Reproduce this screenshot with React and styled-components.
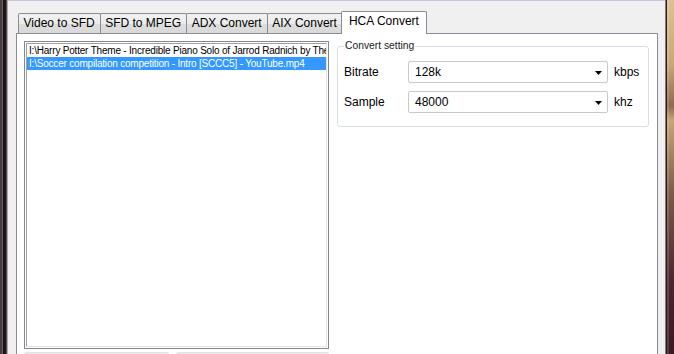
import React from 'react';
import styled, { createGlobalStyle } from 'styled-components';

const GlobalStyle = createGlobalStyle`
  html,
  body {
    margin: 0;
    padding: 0;
  }

  body {
    width: 674px;
    height: 354px;
    overflow: hidden;
    background: #f0f0f0;
    font-family: 'Liberation Sans', Arial, sans-serif;
    color: #000;
  }
`;

const Window = styled.div`
  display: flex;
  width: 674px;
  height: 354px;
  overflow: hidden;
`;

const LeftFrame = styled.div`
  flex: none;
  width: 8px;
  background: linear-gradient(
    to right,
    #463f3f 0 2px,
    #6a5e5e 2px 3px,
    #1e1616 3px 6px,
    #575050 6px 7px,
    #a9a9a9 7px 8px
  );
`;

const RightFrame = styled.div`
  flex: none;
  width: 8px;
  border-left: 1px solid #7c7c7c;
  background: linear-gradient(
    to bottom,
    #dcc294 0,
    #c9a877 18%,
    #8f6a4c 30%,
    #c7a678 34%,
    #7b5a48 55%,
    #4a2630 80%,
    #3a1a24 100%
  );
  box-shadow: inset 1px 0 0 #2a1a1a, inset 3px 0 0 rgba(255, 255, 255, 0.15);
`;

const Client = styled.div`
  flex: 1;
  display: flex;
  flex-direction: column;
  min-width: 0;
  padding: 10px 7px 0 8px;
  border-top: 1px solid #c6c7de;
  background: #f0f0f0;
`;

const TabStrip = styled.div`
  display: flex;
  align-items: flex-end;
  height: 22px;
  padding-left: 2px;
`;

const Tab = styled.div`
  position: relative;
  box-sizing: border-box;
  height: ${({ $active }) => ($active ? '23px' : '20px')};
  margin: ${({ $active }) => ($active ? '0 -2px -1px -2px' : '0 0 0 -1px')};
  padding: ${({ $active }) => ($active ? '0 7px 2px' : '0 5px 0 4.5px')};
  border: 1px solid #898c95;
  border-bottom: none;
  border-radius: 2px 2px 0 0;
  background: ${({ $active }) =>
    $active
      ? '#fff'
      : 'linear-gradient(to bottom, #f2f2f2 0%, #ebebeb 50%, #dddddd 51%, #d9d9d9 100%)'};
  z-index: ${({ $active }) => ($active ? 2 : 1)};
  font-size: 12px;
  line-height: 19px;
  white-space: nowrap;

  &:first-child {
    margin-left: 0;
  }
`;

const Panel = styled.div`
  flex: 1;
  display: flex;
  align-items: flex-start;
  gap: 8px;
  min-height: 0;
  padding: 7px 7px 0;
  border: 1px solid #898c95;
  border-bottom: none;
  background: #fff;
`;

const FileColumn = styled.div`
  flex: none;
  display: flex;
  flex-direction: column;
  width: 305px;
`;

const ListBox = styled.div`
  box-sizing: border-box;
  height: 308px;
  padding: 1px;
  border: 1px solid #828790;
  background: #fff;
`;

const ListInner = styled.div`
  box-sizing: border-box;
  height: 100%;
  overflow: hidden;
  border: 1px solid;
  border-color: #a0a0a0 #e3e3e3 #e3e3e3 #a0a0a0;
`;

const ListItem = styled.div`
  height: 13px;
  padding-left: 2px;
  font-size: 10px;
  letter-spacing: -0.2px;
  line-height: 13px;
  white-space: nowrap;
  overflow: hidden;
  background: ${({ $selected }) => ($selected ? '#3399ff' : 'transparent')};
  color: ${({ $selected }) => ($selected ? '#fff' : '#000')};
`;

const ButtonRow = styled.div`
  display: flex;
  gap: 7px;
  margin-top: 3px;
`;

const Button = styled.div`
  box-sizing: border-box;
  width: ${({ $width }) => $width}px;
  height: 23px;
  border: 1px solid #e3e3e3;
  border-radius: 2px;
  background: #ececec;
`;

const Group = styled.fieldset`
  box-sizing: border-box;
  width: 312px;
  margin: -1px 0 0;
  padding: 9px 6px 13px;
  border: 1px solid #d5dfe5;
  border-radius: 3px;
  display: flex;
  flex-direction: column;
  gap: 8px;
`;

const Legend = styled.legend`
  padding: 0 1px;
  font-size: 10.3px;
  line-height: 12px;
  color: #1a1a1a;
`;

const Row = styled.div`
  display: flex;
  align-items: center;
  height: 22px;
  font-size: 12px;
`;

const Label = styled.span`
  width: 64px;
  flex: none;
`;

const Combo = styled.div`
  box-sizing: border-box;
  display: flex;
  align-items: center;
  justify-content: space-between;
  width: 200px;
  height: 22px;
  padding: 0 5px 0 6px;
  border: 1px solid #c9c9c9;
  border-radius: 2px;
  background: #fff;
  font-size: 12px;
`;

const Unit = styled.span`
  margin-left: 6px;
`;

const Arrow = () => (
  <svg width="7" height="4" viewBox="0 0 7 4" style={{ marginTop: 1 }}>
    <polygon points="0,0 7,0 3.5,4" fill="#000" />
  </svg>
);

const tabs = ['Video to SFD', 'SFD to MPEG', 'ADX Convert', 'AIX Convert', 'HCA Convert'];

const files = [
  'I:\\Harry Potter Theme - Incredible Piano Solo of Jarrod Radnich by The Piano Guys.mp4',
  'I:\\Soccer compilation competition - Intro [SCCC5] - YouTube.mp4',
];

const settings = [
  { label: 'Bitrate', value: '128k', unit: 'kbps' },
  { label: 'Sample', value: '48000', unit: 'khz' },
];

export default function App() {
  return (
    <>
      <GlobalStyle />
      <Window>
        <LeftFrame />
        <Client>
          <TabStrip>
            {tabs.map((t) => (
              <Tab key={t} $active={t === 'HCA Convert'}>
                {t}
              </Tab>
            ))}
          </TabStrip>
          <Panel>
            <FileColumn>
              <ListBox>
                <ListInner>
                  {files.map((f, i) => (
                    <ListItem key={f} $selected={i === 1}>
                      {f}
                    </ListItem>
                  ))}
                </ListInner>
              </ListBox>
              <ButtonRow>
                <Button $width={145} />
                <Button $width={153} />
              </ButtonRow>
            </FileColumn>
            <Group>
              <Legend>Convert setting</Legend>
              {settings.map((s) => (
                <Row key={s.label}>
                  <Label>{s.label}</Label>
                  <Combo>
                    <span>{s.value}</span>
                    <Arrow />
                  </Combo>
                  <Unit>{s.unit}</Unit>
                </Row>
              ))}
            </Group>
          </Panel>
        </Client>
        <RightFrame />
      </Window>
    </>
  );
}
